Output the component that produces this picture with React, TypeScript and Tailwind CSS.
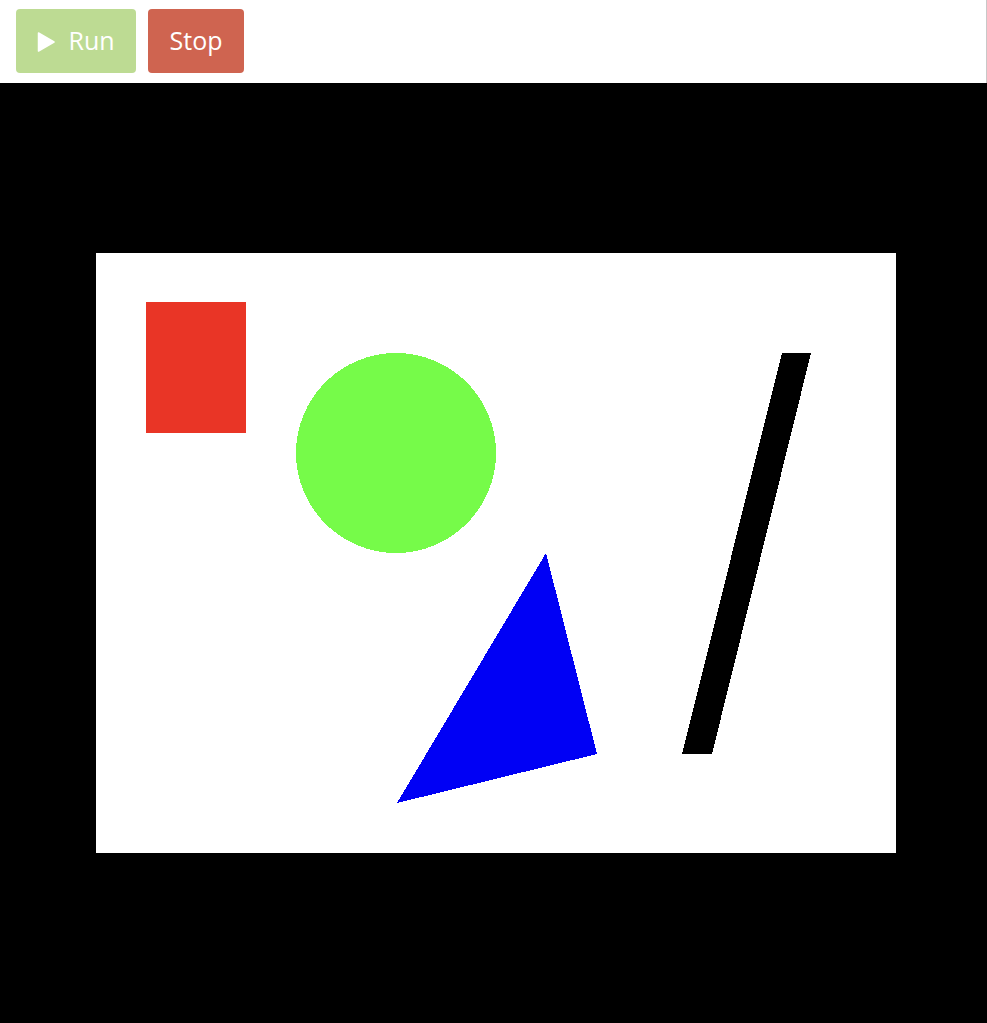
const font = { fontFamily: '"Open Sans", "Liberation Sans", sans-serif' };

function Toolbar() {
  return (
    <header className="h-[83px] shrink-0 flex items-start gap-3 bg-white pl-4 pt-[9px] border-r border-[#c8c8c8]">
      <button
        className="h-16 w-[120px] flex items-center justify-center gap-[13px] rounded bg-[#bddb93] text-white text-[25px] font-medium"
        style={font}
      >
        <svg width="18" height="20" viewBox="0 0 18 20" className="mt-[1px]">
          <path d="M1.5 1 L17 10 L1.5 19 Z" fill="white" stroke="white" strokeWidth="1.5" strokeLinejoin="round" />
        </svg>
        <span>Run</span>
      </button>
      <button
        className="h-16 w-24 flex items-center justify-center rounded bg-[#cf6450] text-white text-[25px] font-medium"
        style={font}
      >
        Stop
      </button>
    </header>
  );
}

function Scene() {
  return (
    <svg width="800" height="600" viewBox="0 0 800 600" className="block bg-white" shapeRendering="crispEdges">
      <rect x="50" y="49" width="100" height="131" fill="#e93526" />
      <circle cx="300" cy="200" r="100" fill="#76fb49" />
      <polygon points="450,300 501,501 301,550" fill="#0000f5" />
      <polygon points="686,100 715,100 616,501 586,501" fill="#000000" />
    </svg>
  );
}

export default function App() {
  return (
    <div className="h-screen w-full flex flex-col overflow-hidden">
      <Toolbar />
      <main className="flex-1 bg-black flex items-center">
        <div className="ml-[96px]">
          <Scene />
        </div>
      </main>
    </div>
  );
}
